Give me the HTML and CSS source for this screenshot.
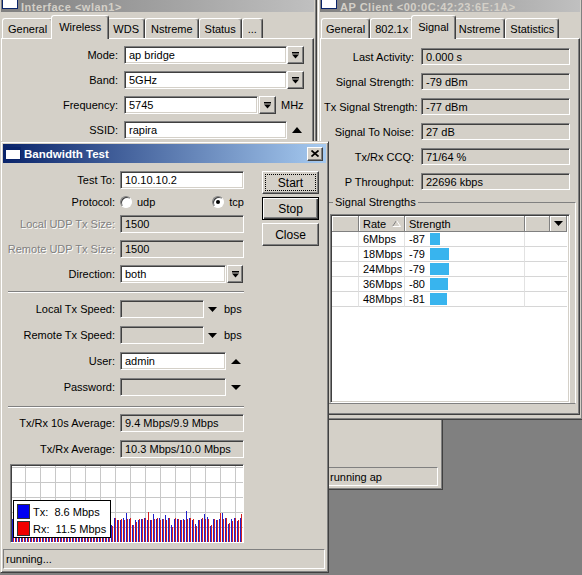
FILE: index.html
```html
<!DOCTYPE html>
<html lang="en">
<head>
  <meta charset="UTF-8">
  <title>Bandwidth Test</title>
  <link rel="stylesheet" href="styles.css">
</head>
<body>
<div class="desktop">

  <!-- Interface window -->
  <div class="window win-iface">
    <div class="titlebar inactive">
      <svg class="ticon" width="16" height="13" viewBox="0 0 16 13"><rect width="16" height="13" fill="#0a246a"/><rect x="1" y="3" width="14" height="9" fill="#fff"/></svg>
      <span class="ttext">Interface &lt;wlan1&gt;</span>
    </div>
    <div class="tabs">
      <div class="tab">General</div>
      <div class="tab active">Wireless</div>
      <div class="tab">WDS</div>
      <div class="tab">Nstreme</div>
      <div class="tab">Status</div>
      <div class="tab">...</div>
    </div>
    <div class="panel iface-panel">
      <div class="iface-form">
        <div class="label">Mode:</div>
        <div class="ctl">
          <div class="input w163">ap bridge</div>
          <div class="dropbtn"><svg width="7" height="7" viewBox="0 0 7 7"><path d="M0 0h7v1.5H0zM0 2.5h7L3.5 6.5z"/></svg></div>
        </div>
        <div class="label">Band:</div>
        <div class="ctl">
          <div class="input w163">5GHz</div>
          <div class="dropbtn"><svg width="7" height="7" viewBox="0 0 7 7"><path d="M0 0h7v1.5H0zM0 2.5h7L3.5 6.5z"/></svg></div>
        </div>
        <div class="label">Frequency:</div>
        <div class="ctl">
          <div class="input w134">5745</div>
          <div class="dropbtn gap1"><svg width="7" height="7" viewBox="0 0 7 7"><path d="M0 0h7v1.5H0zM0 2.5h7L3.5 6.5z"/></svg></div>
          <span class="unit">MHz</span>
        </div>
        <div class="label">SSID:</div>
        <div class="ctl">
          <div class="input w163">rapira</div>
          <svg class="tri" width="10" height="6" viewBox="0 0 10 6"><path d="M0 6h10L5 0z"/></svg>
        </div>
      </div>
    </div>
  </div>

  <!-- window behind, only its status bar shows -->
  <div class="window win-behind">
    <div class="status behind-status">running ap</div>
  </div>

  <!-- AP Client window -->
  <div class="window win-ap">
    <div class="titlebar inactive">
      <svg class="ticon" width="16" height="13" viewBox="0 0 16 13"><rect width="16" height="13" fill="#0a246a"/><rect x="1" y="3" width="14" height="9" fill="#fff"/></svg>
      <span class="ttext">AP Client &lt;00:0C:42:23:6E:1A&gt;</span>
    </div>
    <div class="tabs">
      <div class="tab">General</div>
      <div class="tab">802.1x</div>
      <div class="tab active">Signal</div>
      <div class="tab">Nstreme</div>
      <div class="tab">Statistics</div>
    </div>
    <div class="panel ap-panel">
      <div class="ap-form">
        <div class="label">Last Activity:</div><div class="input disabled">0.000 s</div>
        <div class="label">Signal Strength:</div><div class="input disabled">-79 dBm</div>
        <div class="label">Tx Signal Strength:</div><div class="input disabled">-77 dBm</div>
        <div class="label">Signal To Noise:</div><div class="input disabled">27 dB</div>
        <div class="label">Tx/Rx CCQ:</div><div class="input disabled">71/64 %</div>
        <div class="label">P Throughput:</div><div class="input disabled">22696 kbps</div>
      </div>
      <fieldset class="group">
        <legend>Signal Strengths</legend>
        <div class="list">
          <div class="lh"></div>
          <div class="lh sort">Rate <svg width="9" height="7" viewBox="0 0 9 7"><path d="M4.5 0.5L0.5 6.5" stroke="#808080" fill="none"/><path d="M4.5 0.5L8.5 6.5H0.5" stroke="#fff" fill="none"/></svg></div>
          <div class="lh">Strength</div>
          <div class="lh"></div>
          <div class="lh menu"><svg width="9" height="5" viewBox="0 0 9 5"><path d="M0 0h9L4.5 5z"/></svg></div>

          <div class="lc"></div><div class="lc">6Mbps</div><div class="lc"><span class="num">-87</span><span class="bar" style="width:10px"></span></div><div class="lc wide"></div>
          <div class="lc"></div><div class="lc">18Mbps</div><div class="lc"><span class="num">-79</span><span class="bar" style="width:19px"></span></div><div class="lc wide"></div>
          <div class="lc"></div><div class="lc">24Mbps</div><div class="lc"><span class="num">-79</span><span class="bar" style="width:19px"></span></div><div class="lc wide"></div>
          <div class="lc"></div><div class="lc">36Mbps</div><div class="lc"><span class="num">-80</span><span class="bar" style="width:18px"></span></div><div class="lc wide"></div>
          <div class="lc"></div><div class="lc">48Mbps</div><div class="lc"><span class="num">-81</span><span class="bar" style="width:17px"></span></div><div class="lc wide"></div>
        </div>
      </fieldset>
    </div>
  </div>

  <!-- Bandwidth Test window -->
  <div class="window win-bt">
    <div class="titlebar">
      <svg class="ticon" width="16" height="13" viewBox="0 0 16 13"><rect width="16" height="13" fill="#0a246a"/><rect x="1" y="3" width="14" height="9" fill="#fff"/></svg>
      <span>Bandwidth Test</span>
      <div class="close"><svg width="8" height="7" viewBox="0 0 8 7"><path d="M0.5 0.5L7.5 6.5M7.5 0.5L0.5 6.5" stroke="#000" stroke-width="1.7"/></svg></div>
    </div>

    <div class="bt-body">
      <div class="bt-form">
        <div class="fgrid top">
          <div class="label">Test To:</div>
          <div class="input">10.10.10.2</div>
          <div class="label">Protocol:</div>
          <div class="radios">
            <span class="radio"><i></i>udp</span>
            <span class="radio"><i class="on"></i>tcp</span>
          </div>
          <div class="label off">Local UDP Tx Size:</div>
          <div class="input disabled">1500</div>
          <div class="label off">Remote UDP Tx Size:</div>
          <div class="input disabled">1500</div>
          <div class="label">Direction:</div>
          <div class="ctl">
            <div class="input w106">both</div>
            <div class="dropbtn gap1 w16"><svg width="7" height="7" viewBox="0 0 7 7"><path d="M0 0h7v1.5H0zM0 2.5h7L3.5 6.5z"/></svg></div>
          </div>
        </div>

        <div class="sep"></div>

        <div class="fgrid">
          <div class="label">Local Tx Speed:</div>
          <div class="ctl">
            <div class="input disabled w84"></div>
            <svg class="tri down" width="9" height="5" viewBox="0 0 9 5"><path d="M0 0h9L4.5 5z"/></svg>
            <span class="unit wide">bps</span>
          </div>
          <div class="label">Remote Tx Speed:</div>
          <div class="ctl">
            <div class="input disabled w84"></div>
            <svg class="tri down" width="9" height="5" viewBox="0 0 9 5"><path d="M0 0h9L4.5 5z"/></svg>
            <span class="unit wide">bps</span>
          </div>
          <div class="label">User:</div>
          <div class="ctl">
            <div class="input w106">admin</div>
            <svg class="tri" width="10" height="5" viewBox="0 0 10 5"><path d="M0 5h10L5 0z"/></svg>
          </div>
          <div class="label">Password:</div>
          <div class="ctl">
            <div class="input disabled w106"></div>
            <svg class="tri" width="10" height="5" viewBox="0 0 10 5"><path d="M0 0h10L5 5z"/></svg>
          </div>
        </div>

        <div class="sep lower"></div>

        <div class="fgrid">
          <div class="label">Tx/Rx 10s Average:</div>
          <div class="input disabled">9.4 Mbps/9.9 Mbps</div>
          <div class="label">Tx/Rx Average:</div>
          <div class="input disabled">10.3 Mbps/10.0 Mbps</div>
        </div>

        <div class="graph">
          <svg class="bars" width="232" height="77" viewBox="0 0 232 77">
            <path stroke="#2222cc" stroke-width="1" d="M1.5 54V77M4.5 54V77M7.5 53V77M10.5 56V77M13.5 53V77M16.5 54V77M19.5 53V77M22.5 53V77M25.5 54V77M28.5 54V77M31.5 55V77M34.5 54V77M37.5 54V77M40.5 52V77M43.5 54V77M46.5 54V77M49.5 55V77M52.5 53V77M55.5 55V77M58.5 53V77M61.5 53V77M64.5 55V77M67.5 55V77M70.5 53V77M73.5 53V77M76.5 53V77M79.5 54V77M82.5 54V77M85.5 54V77M88.5 55V77M91.5 54V77M94.5 53V77M97.5 54V77M100.5 60V77M103.5 53V77M106.5 55V77M109.5 55V77M112.5 53V77M115.5 48V77M118.5 54V77M121.5 60V77M124.5 55V77M127.5 55V77M130.5 54V77M133.5 53V77M136.5 55V77M139.5 55V77M142.5 49V77M145.5 54V77M148.5 53V77M151.5 54V77M154.5 50V77M157.5 53V77M160.5 60V77M163.5 54V77M166.5 54V77M169.5 55V77M172.5 54V77M175.5 46V77M178.5 53V77M181.5 55V77M184.5 59V77M187.5 55V77M190.5 54V77M193.5 49V77M196.5 52V77M199.5 61V77M202.5 54V77M205.5 55V77M208.5 54V77M211.5 48V77M214.5 53V77M217.5 59V77M220.5 54V77M223.5 53V77M226.5 56V77M229.5 53V77"/>
            <path stroke="#d42020" stroke-width="1" d="M2.5 53V77M5.5 56V77M8.5 53V77M11.5 55V77M14.5 53V77M17.5 56V77M20.5 52V77M23.5 53V77M26.5 54V77M29.5 55V77M32.5 55V77M35.5 54V77M38.5 53V77M41.5 54V77M44.5 54V77M47.5 53V77M50.5 55V77M53.5 55V77M56.5 54V77M59.5 53V77M62.5 53V77M65.5 56V77M68.5 55V77M71.5 53V77M74.5 52V77M77.5 55V77M80.5 54V77M83.5 53V77M86.5 54V77M89.5 57V77M92.5 53V77M95.5 53V77M98.5 54V77M101.5 61V77M104.5 53V77M107.5 55V77M110.5 54V77M113.5 55V77M116.5 54V77M119.5 53V77M122.5 60V77M125.5 57V77M128.5 54V77M131.5 54V77M134.5 53V77M137.5 47V77M140.5 55V77M143.5 54V77M146.5 53V77M149.5 55V77M152.5 54V77M155.5 55V77M158.5 53V77M161.5 62V77M164.5 53V77M167.5 54V77M170.5 55V77M173.5 55V77M176.5 54V77M179.5 53V77M182.5 54V77M185.5 61V77M188.5 55V77M191.5 53V77M194.5 54V77M197.5 54V77M200.5 60V77M203.5 54V77M206.5 55V77M209.5 48V77M212.5 54V77M215.5 53V77M218.5 58V77M221.5 56V77M224.5 53V77M227.5 55V77M230.5 49V77"/>
          </svg>
          <div class="legend">
            <div class="legend-row"><span class="swatch tx"></span>Tx:  8.6 Mbps</div>
            <div class="legend-row"><span class="swatch rx"></span>Rx:  11.5 Mbps</div>
          </div>
        </div>
      </div>

      <div class="bt-buttons">
        <div class="btn focus">Start</div>
        <div class="btn default">Stop</div>
        <div class="btn">Close</div>
      </div>
    </div>

    <div class="status bt-status">running...</div>
  </div>

</div>
</body>
</html>
```

FILE: styles.css
```css
* {
  box-sizing: border-box;
}

body {
  margin: 0;
  background-color: #808080;
  font-family: "Liberation Sans", Arial, sans-serif;
  font-size: 11px;
  color: #000;
}

.desktop {
  position: relative;
  width: 582px;
  height: 575px;
  overflow: hidden;
}

/* windows */

.window {
  position: absolute;
  display: flex;
  flex-direction: column;
  padding: 2px;
  background-color: #d4d0c8;
  border: 1px solid;
  border-color: #d4d0c8 #404040 #404040 #d4d0c8;
  box-shadow: inset 1px 1px #fff, inset -1px -1px #808080;
}

.win-iface {
  left: -2px;
  top: -9px;
  width: 319px;
  height: 300px;
  z-index: 1;
}

.win-behind {
  left: 320px;
  top: 300px;
  width: 123px;
  height: 190px;
  z-index: 2;
  justify-content: flex-end;
}

.win-ap {
  left: 317px;
  top: -9px;
  width: 266px;
  height: 429px;
  padding-bottom: 4px;
  z-index: 3;
}

.win-bt {
  left: 0;
  top: 141px;
  width: 329px;
  height: 432px;
  z-index: 4;
}

.titlebar {
  display: flex;
  align-items: center;
  gap: 3px;
  height: 19px;
  padding: 0 2px;
  flex-shrink: 0;
  background: linear-gradient(to right, #0a246a, #a6caf0);
  color: #fff;
  font-weight: bold;
  font-size: 11.5px;
  white-space: nowrap;
  overflow: hidden;
}

.titlebar.inactive {
  align-items: flex-start;
  height: 18px;
  padding: 0 1px;
  background: linear-gradient(to right, #808080, #c0c0c0);
  color: #d4d0c8;
  font-size: 11px;
  letter-spacing: 0.5px;
  overflow: visible;
}

.titlebar.inactive .ticon {
  margin-top: 2px;
}

.ttext {
  margin-top: 7px;
  line-height: 12px;
}

.ticon {
  flex-shrink: 0;
}

.close {
  display: flex;
  align-items: center;
  justify-content: center;
  width: 16px;
  height: 14px;
  margin-left: auto;
  margin-right: 1px;
  background-color: #d4d0c8;
  border: 1px solid;
  border-color: #fff #404040 #404040 #fff;
  box-shadow: inset -1px -1px #808080;
}

/* tabs */

.tabs {
  display: flex;
  align-items: flex-end;
  height: 23px;
  margin-top: 3px;
  padding-left: 1px;
  position: relative;
  z-index: 1;
  flex-shrink: 0;
}

.tab {
  display: flex;
  align-items: center;
  height: 20px;
  padding: 0 5px;
  border: 1px solid;
  border-bottom: 0;
  border-color: #fff #404040 #404040 #fff;
  border-radius: 3px 3px 0 0;
  box-shadow: inset -1px 0 #808080;
  white-space: nowrap;
}

.win-ap .tab {
  padding: 0 4px;
}

.tab.active,
.win-ap .tab.active {
  height: 24px;
  margin: 0 -2px -1px;
  padding: 0 7px 2px;
  background-color: #d4d0c8;
  position: relative;
  z-index: 1;
}

.win-ap .tab.active {
  padding: 0 6px 2px;
}

.panel {
  flex: 1;
  border: 1px solid;
  border-color: #fff #404040 #404040 #fff;
  box-shadow: inset -1px -1px #808080;
}

/* form parts */

.label {
  align-self: center;
  text-align: right;
  white-space: nowrap;
}

.label.off {
  color: #808080;
  text-shadow: 1px 1px #fff;
}

.input {
  display: flex;
  align-items: center;
  height: 18px;
  padding: 0 3px 0 4px;
  background-color: #fff;
  border: 1px solid;
  border-color: #808080 #fff #fff #808080;
  box-shadow: inset 1px 1px #404040, inset -1px -1px #d4d0c8;
  white-space: nowrap;
  overflow: hidden;
}

.input.disabled {
  background-color: #d4d0c8;
}

.ctl {
  display: flex;
  align-items: center;
}

.w163 { width: 163px; }
.w134 { width: 134px; }
.w106 { width: 106px; }
.w84 { width: 84px; }

.dropbtn {
  display: flex;
  align-items: center;
  justify-content: center;
  width: 17px;
  height: 18px;
  background-color: #d4d0c8;
  border: 1px solid;
  border-color: #fff #404040 #404040 #fff;
  box-shadow: inset -1px -1px #808080;
}

.dropbtn.gap1 {
  margin-left: 1px;
}

.dropbtn.w16 {
  width: 16px;
}

.tri {
  margin-left: 5px;
}

.tri.down {
  margin-left: 4px;
}

.unit {
  margin-left: 5px;
}

.unit.wide {
  margin-left: 7px;
}

/* interface window */

.iface-panel {
  padding: 7px 0 0 3px;
}

.iface-form {
  display: grid;
  grid-template-columns: 113px auto;
  grid-auto-rows: 18px;
  column-gap: 6px;
  row-gap: 7px;
}

/* ap client window */

.ap-panel {
  padding: 9px 3px 0;
}

.ap-form {
  display: grid;
  grid-template-columns: 90px 149px;
  grid-auto-rows: 17px;
  column-gap: 7px;
  row-gap: 8px;
}

.ap-form .input {
  height: 17px;
}

.group {
  margin: 6px 0 0 3px;
  padding: 0 5px 0 2px;
  border: 1px solid #808080;
  border-right-color: #fff;
  min-width: 0;
}

.group legend {
  margin-left: 3px;
  padding: 0 2px;
  line-height: 13px;
}

.list {
  display: grid;
  grid-template-columns: 27px 46px 120px 25px 17px;
  grid-template-rows: 16px;
  grid-auto-rows: 15px;
  align-content: start;
  height: 189px;
  margin-top: 5px;
  padding: 1px;
  background-color: #fff;
  border: 1px solid;
  border-color: #808080 #fff #fff #808080;
  box-shadow: inset 1px 1px #404040, inset -1px -1px #d4d0c8;
}

.lh {
  display: flex;
  align-items: center;
  padding-left: 4px;
  background-color: #d4d0c8;
  border-right: 1px solid #808080;
  border-bottom: 1px solid #808080;
  box-shadow: inset 1px 1px #fff;
}

.lh.sort {
  justify-content: space-between;
  padding-right: 3px;
}

.lh.menu {
  justify-content: center;
  padding-left: 0;
}

.lc {
  display: flex;
  align-items: center;
  padding-left: 4px;
  border-right: 1px solid #e2e2e2;
  border-bottom: 1px solid #d6d6d6;
  white-space: nowrap;
}

.lc.wide {
  grid-column: span 2;
  border-right: 0;
}

.num {
  width: 21px;
}

.bar {
  height: 12px;
  background-color: #38b4ee;
}

/* bandwidth test window */

.bt-body {
  display: flex;
  flex: 1;
}

.bt-form {
  width: 241px;
  padding-top: 8px;
}

.fgrid {
  display: grid;
  grid-template-columns: 112px 124px;
  grid-auto-rows: 18px;
  column-gap: 5px;
  row-gap: 8px;
}

.fgrid.top {
  grid-template-rows: 18px 12px 18px 18px 18px;
  row-gap: 7px;
}

.radios {
  display: flex;
  justify-content: space-between;
  align-items: center;
}

.radio {
  display: flex;
  align-items: center;
  gap: 5px;
}

.radio i {
  display: flex;
  align-items: center;
  justify-content: center;
  width: 12px;
  height: 12px;
  border-radius: 50%;
  background-color: #fff;
  border: 1px solid;
  border-color: #808080 #fff #fff #808080;
  box-shadow: inset 1px 1px #404040;
}

.radio i.on::after {
  content: "";
  width: 4px;
  height: 4px;
  border-radius: 50%;
  background-color: #000;
}

.sep {
  height: 2px;
  margin: 8px 0 7px 5px;
  border-top: 1px solid #808080;
  border-bottom: 1px solid #fff;
}

.sep.lower {
  margin: 10px 0 6px 5px;
}

.graph {
  position: relative;
  width: 234px;
  height: 79px;
  margin: 6px 0 0 7px;
  border: 1px solid;
  border-color: #808080 #fff #fff #808080;
  background-color: #fff;
  background-image: linear-gradient(to right, #c8c8c8 1px, transparent 1px), linear-gradient(#c8c8c8 1px, transparent 1px);
  background-size: 15px 15px;
  background-position: 14px 17px;
  box-shadow: inset 1px 1px #404040;
}

.bars {
  display: block;
}

.legend {
  position: absolute;
  left: 2px;
  top: 35px;
  display: flex;
  flex-direction: column;
  gap: 2px;
  width: 98px;
  height: 38px;
  padding: 3px 3px 1px;
  background-color: #fff;
  border: 1px solid #000;
}

.legend-row {
  display: flex;
  align-items: center;
  gap: 3px;
  height: 15px;
  white-space: pre;
}

.swatch {
  width: 13px;
  height: 15px;
  border: 1px solid #333;
}

.swatch.tx {
  background-color: #0000f0;
}

.swatch.rx {
  background-color: #f00000;
}

.bt-buttons {
  display: flex;
  flex-direction: column;
  gap: 3px;
  width: 57px;
  margin-left: 18px;
  padding-top: 8px;
}

.btn {
  display: flex;
  align-items: center;
  justify-content: center;
  height: 23px;
  background-color: #d4d0c8;
  border: 1px solid;
  border-color: #fff #404040 #404040 #fff;
  box-shadow: inset -1px -1px #808080;
  font-size: 12px;
}

.btn.focus {
  position: relative;
}

.btn.focus::after {
  content: "";
  position: absolute;
  inset: 2px;
  border: 1px dotted #000;
}

.btn.default {
  border-color: #000;
  box-shadow: inset 1px 1px #fff, inset -1px -1px #404040, inset -2px -2px #808080;
}

.status {
  display: flex;
  align-items: center;
  height: 20px;
  padding-left: 2px;
  border: 1px solid;
  border-color: #808080 #fff #fff #808080;
  white-space: nowrap;
  overflow: hidden;
  flex-shrink: 0;
}

.bt-status {
  margin: 0 1px 1px 0;
}

.behind-status {
  height: 19px;
  margin: 0 2px 1px 0;
  padding-left: 6px;
}
```
